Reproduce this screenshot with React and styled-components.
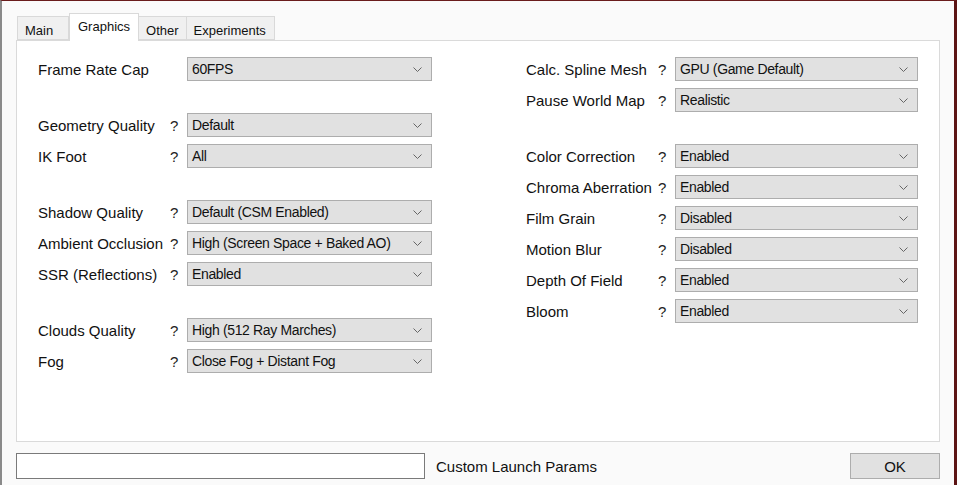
import React from "react";
import styled, { createGlobalStyle } from "styled-components";

const GlobalStyle = createGlobalStyle`
	html, body {
		margin: 0;
		padding: 0;
		background: #fafafa;
	}
	body {
		font-family: "Liberation Sans", Arial, sans-serif;
		color: #111;
	}
`;

const Window = styled.div`
	box-sizing: border-box;
	width: 957px;
	height: 485px;
	border-top: 1px solid #6a1c1c;
	border-left: 2px solid #8a8a8a;
	border-right: 3px solid #5c1414;
	padding: 12px 15px 0 14px;
	background: #fafafa;
	display: flex;
	flex-direction: column;
`;

const TabStrip = styled.div`
	display: flex;
	align-items: flex-end;
	height: 27px;
	margin-left: 1px;
	position: relative;
	z-index: 1;
`;

const Tab = styled.div`
	box-sizing: border-box;
	height: ${(p) => (p.$active ? "28px" : "24px")};
	min-width: ${(p) => p.$min || 0}px;
	margin-bottom: ${(p) => (p.$active ? "-1px" : "0")};
	padding: ${(p) => (p.$active ? "5px 8px 0" : "6px 7px 0")};
	border: 1px solid #d9d9d9;
	border-bottom: ${(p) => (p.$active ? "none" : "1px solid #d9d9d9")};
	border-left-width: ${(p) => (p.$first || p.$active ? "1px" : "0")};
	background: ${(p) => (p.$active ? "#fff" : "#f0f0f0")};
	font-size: 13px;
	color: #111;
	white-space: nowrap;
`;

const Panel = styled.div`
	box-sizing: border-box;
	width: 924px;
	height: 402px;
	border: 1px solid #dadada;
	background: #fff;
	padding: 16px 0 0 21px;
	display: flex;
	gap: 94px;
`;

const Column = styled.div`
	display: flex;
	flex-direction: column;
	width: ${(p) => p.$width}px;
`;

const Group = styled.div`
	display: flex;
	flex-direction: column;
	gap: 7px;
	margin-bottom: 32px;
`;

const Row = styled.div`
	display: grid;
	grid-template-columns: 128px 21px 1fr;
	align-items: center;
	height: 24px;
`;

const Label = styled.span`
	font-size: 15px;
	white-space: nowrap;
	color: #111;
`;

const Help = styled.span`
	font-size: 15px;
	padding-left: 4px;
	color: #222;
`;

const Combo = styled.div`
	box-sizing: border-box;
	height: 24px;
	border: 1px solid #adadad;
	background: #e1e1e1;
	display: flex;
	align-items: center;
	justify-content: space-between;
	padding: 0 9px 0 4px;
	font-size: 14px;
	letter-spacing: -0.35px;
	color: #111;
	white-space: nowrap;
`;

const Footer = styled.div`
	display: flex;
	align-items: center;
	height: 26px;
	margin-top: 11px;
	width: 924px;
`;

const TextBox = styled.div`
	box-sizing: border-box;
	width: 409px;
	height: 26px;
	border: 1px solid #7a7a7a;
	background: #fff;
`;

const FooterLabel = styled.span`
	margin-left: 11px;
	font-size: 15px;
	color: #111;
`;

const Button = styled.div`
	box-sizing: border-box;
	margin-left: auto;
	width: 90px;
	height: 26px;
	border: 1px solid #adadad;
	background: #e1e1e1;
	display: flex;
	align-items: center;
	justify-content: center;
	font-size: 15px;
	color: #111;
`;

const Chevron = () => (
	<svg width="9" height="5" viewBox="0 0 9 5">
		<path d="M0.5 0.5 L4.5 4.5 L8.5 0.5" fill="none" stroke="#666" strokeWidth="1" />
	</svg>
);

const left = [
	[["Frame Rate Cap", "60FPS", false]],
	[
		["Geometry Quality", "Default"],
		["IK Foot", "All"],
	],
	[
		["Shadow Quality", "Default (CSM Enabled)"],
		["Ambient Occlusion", "High (Screen Space + Baked AO)"],
		["SSR (Reflections)", "Enabled"],
	],
	[
		["Clouds Quality", "High (512 Ray Marches)"],
		["Fog", "Close Fog + Distant Fog"],
	],
];

const right = [
	[
		["Calc. Spline Mesh", "GPU (Game Default)"],
		["Pause World Map", "Realistic"],
	],
	[
		["Color Correction", "Enabled"],
		["Chroma Aberration", "Enabled"],
		["Film Grain", "Disabled"],
		["Motion Blur", "Disabled"],
		["Depth Of Field", "Enabled"],
		["Bloom", "Enabled"],
	],
];

function SettingsColumn({ groups, width }) {
	return (
		<Column $width={width}>
			{groups.map((group, i) => (
				<Group key={i}>
					{group.map(([name, value, help = true]) => (
						<Row key={name}>
							<Label>{name}</Label>
							<Help>{help ? "?" : ""}</Help>
							<Combo>
								<span>{value}</span>
								<Chevron />
							</Combo>
						</Row>
					))}
				</Group>
			))}
		</Column>
	);
}

export default function App() {
	return (
		<>
			<GlobalStyle />
			<Window>
				<TabStrip>
					<Tab $first $min={52}>Main</Tab>
					<Tab $active $min={69}>Graphics</Tab>
					<Tab $min={47}>Other</Tab>
					<Tab $min={88}>Experiments</Tab>
				</TabStrip>
				<Panel>
					<SettingsColumn groups={left} width={394} />
					<SettingsColumn groups={right} width={392} />
				</Panel>
				<Footer>
					<TextBox />
					<FooterLabel>Custom Launch Params</FooterLabel>
					<Button>OK</Button>
				</Footer>
			</Window>
		</>
	);
}
